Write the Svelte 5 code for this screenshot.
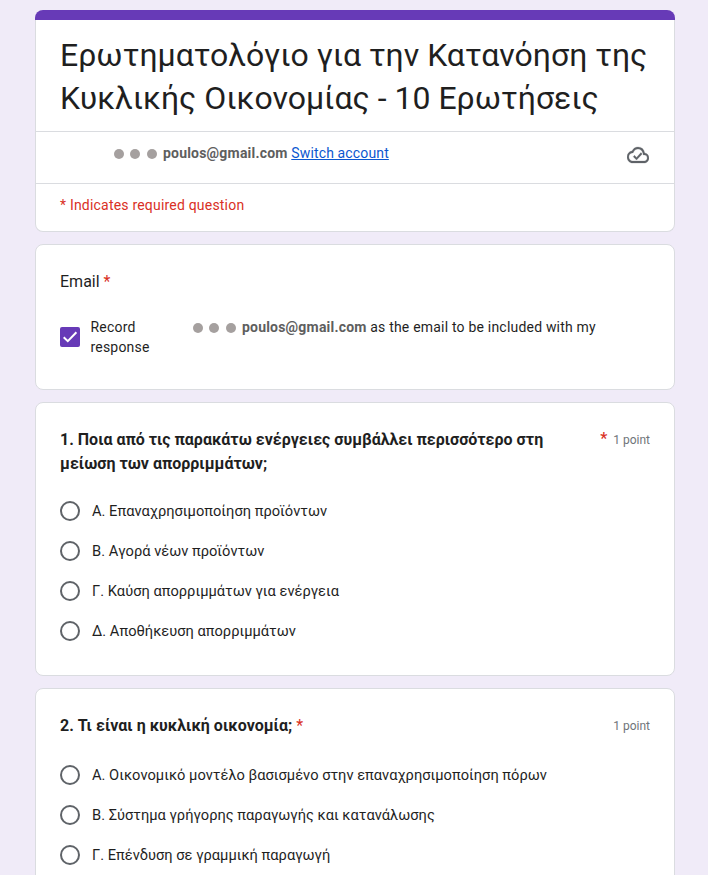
<script lang="ts">
    const questions = [
        {
            title: "1. Ποια από τις παρακάτω ενέργειες συμβάλλει περισσότερο στη μείωση των απορριμμάτων;",
            long: true,
            options: [
                "Α. Επαναχρησιμοποίηση προϊόντων",
                "Β. Αγορά νέων προϊόντων",
                "Γ. Καύση απορριμμάτων για ενέργεια",
                "Δ. Αποθήκευση απορριμμάτων",
            ],
        },
        {
            title: "2. Τι είναι η κυκλική οικονομία;",
            long: false,
            options: [
                "Α. Οικονομικό μοντέλο βασισμένο στην επαναχρησιμοποίηση πόρων",
                "Β. Σύστημα γρήγορης παραγωγής και κατανάλωσης",
                "Γ. Επένδυση σε γραμμική παραγωγή",
            ],
        },
    ];
</script>

{#snippet dots()}
    <span class="dots"><i></i><i></i><i></i></span>
{/snippet}

<main>
    <div class="bar"></div>
    <section class="card header">
        <h1>Ερωτηματολόγιο για την Κατανόηση της Κυκλικής Οικονομίας - 10 Ερωτήσεις</h1>
        <div class="account">
            <div class="user">
                {@render dots()}
                <span><b>poulos@gmail.com</b> <a href="#switch">Switch account</a></span>
            </div>
            <svg width="22" height="24" viewBox="0 0 24 24" preserveAspectRatio="none" fill="#5f6368" stroke="#5f6368" stroke-width=".25">
                <path d="M19.35 10.04A7.49 7.49 0 0 0 12 4C9.11 4 6.6 5.64 5.35 8.04A5.994 5.994 0 0 0 0 14c0 3.31 2.69 6 6 6h13c2.76 0 5-2.24 5-5 0-2.64-2.05-4.78-4.65-4.96zM19 18H6c-2.21 0-4-1.79-4-4 0-2.05 1.53-3.76 3.56-3.97l1.07-.11.5-.95A5.469 5.469 0 0 1 12 6c2.62 0 4.88 1.86 5.39 4.43l.3 1.5 1.53.11A2.98 2.98 0 0 1 22 15c0 1.65-1.35 3-3 3zm-8.6-3.6-2.2-2.1-1.4 1.4 3.6 3.4 6.2-6.1-1.4-1.4z" />
            </svg>
        </div>
        <p class="notice">* Indicates required question</p>
    </section>

    <section class="card email">
        <h2>Email <em>*</em></h2>
        <div class="record">
            <span class="checkbox">
                <svg width="20" height="20" viewBox="0 0 20 20" fill="none" stroke="#fff" stroke-width="2">
                    <path d="M3.7 10.2 7.8 14.2 16.4 5.2" />
                </svg>
            </span>
            <span class="label">Record response</span>
            {@render dots()}
            <span><b>poulos@gmail.com</b> as the email to be included with my</span>
        </div>
    </section>

    {#each questions as question}
        <section class="card question">
            <div class="top">
                <h3>{question.title}{#if !question.long}{" "}<em>*</em>{/if}</h3>
                <span class="points" class:long={question.long}>{#if question.long}<em>*</em>{/if}1 point</span>
            </div>
            <div class="options">
                {#each question.options as option}
                    <div class="option"><span class="radio"></span>{option}</div>
                {/each}
            </div>
        </section>
    {/each}
</main>

<style>
    :global(body) {
        background: #f0ebf8;
        overflow: hidden;
    }

    main {
        box-sizing: border-box;
        width: 640px;
        height: 875px;
        margin-left: 35px;
        padding-top: 10px;
        overflow: hidden;
        font-family: Roboto, "Liberation Sans", sans-serif;
        font-size: 14px;
        line-height: 20px;
        letter-spacing: .2px;
        color: #1f1f1f;
    }

    .bar {
        height: 10px;
        border-radius: 8px 8px 0 0;
        background: #673ab7;
    }

    .card {
        box-sizing: border-box;
        margin-bottom: 12px;
        background: #fff;
        border: 1px solid #dadce0;
        border-radius: 8px;
    }

    .header {
        height: 212px;
        border-top: 0;
        border-radius: 0 0 8px 8px;
    }

    h1,
    h2,
    h3,
    p {
        margin: 0;
        font-weight: 400;
    }

    h1 {
        height: 111px;
        box-sizing: border-box;
        padding: 14px 24px 0;
        font-size: 32px;
        line-height: 43px;
        letter-spacing: 0;
    }

    em {
        font-style: normal;
        font-weight: 400;
        color: #d93025;
    }

    b {
        font-weight: 700;
        color: #5e5e5e;
    }

    a {
        color: #0b57d0;
        letter-spacing: .14px;
    }

    .account {
        display: flex;
        justify-content: space-between;
        box-sizing: border-box;
        height: 53px;
        padding: 11px 25px 0 78px;
        border-top: 1px solid #dadce0;
        border-bottom: 1px solid #dadce0;
    }

    .user {
        display: flex;
    }

    .dots {
        display: flex;
        gap: 6px;
        padding-top: 6px;
        margin-right: 6px;
    }

    .dots i {
        width: 10px;
        height: 10px;
        border-radius: 50%;
        background: #a5a09f;
    }

    .dots i:last-child {
        margin-left: 1px;
    }

    .notice {
        padding: 11px 24px;
        color: #d93025;
    }

    .email {
        height: 146px;
        padding: 25px 24px 24px;
    }

    h2 {
        font-size: 16px;
        line-height: 24px;
        letter-spacing: 0;
    }

    .record {
        display: flex;
        margin-top: 23px;
    }

    .checkbox {
        width: 20px;
        height: 20px;
        margin: 10px 10.5px 0 0;
        border-radius: 2px;
        background: #673ab7;
    }

    .label {
        width: 102.5px;
    }

    .question {
        padding: 25px 24px 24px;
    }

    .top {
        display: flex;
        justify-content: space-between;
        min-height: 26px;
    }

    h3 {
        width: 500px;
        font-size: 16px;
        font-weight: 700;
        line-height: 24px;
        letter-spacing: 0;
    }

    .points {
        font-size: 12px;
        line-height: 24px;
        letter-spacing: 0;
        color: #70757a;
    }

    .points.long {
        margin-top: -1px;
    }

    .points em {
        margin-right: 6px;
        font-size: 16px;
        font-weight: 500;
    }

    .options {
        padding-top: 15px;
    }

    .option {
        display: flex;
        align-items: center;
        gap: 12px;
        height: 40px;
        font-size: 11pt;
        font-kerning: none;
        letter-spacing: 0;
    }

    .radio {
        box-sizing: border-box;
        width: 20px;
        height: 20px;
        border: 2px solid #5f6368;
        border-radius: 50%;
    }
</style>
